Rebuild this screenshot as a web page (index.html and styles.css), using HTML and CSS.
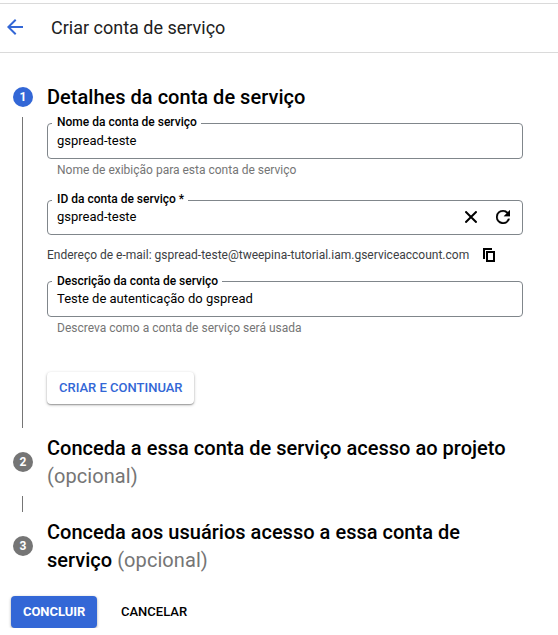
FILE: index.html
```html
<!DOCTYPE html>
<html lang="pt-BR">
<head>
<meta charset="utf-8">
<title>Criar conta de serviço</title>
<link rel="stylesheet" href="styles.css">
</head>
<body>
<header class="topbar">
  <svg class="back" viewBox="0 0 16 16" width="16" height="16"><path d="M16 7H3.800l5.600-5.600L8 0 0 8l8 8 1.400-1.400L3.800 9H16z" fill="#3367d6"/></svg>
  <h1 class="page-title">Criar conta de serviço</h1>
</header>
<main>
  <section class="step step-1">
    <div class="rail"><span class="badge active">1</span><span class="line"></span></div>
    <div class="body">
      <h2 class="heading">Detalhes da conta de serviço</h2>
      <div class="field field-name">
        <label class="label">Nome da conta de serviço</label>
        <span class="value">gspread-teste</span>
      </div>
      <p class="hint">Nome de exibição para esta conta de serviço</p>
      <div class="field field-id">
        <label class="label">ID da conta de serviço *</label>
        <span class="value">gspread-teste</span>
        <svg class="clear" viewBox="0 0 12 12" width="12" height="12"><path d="M.4.4l11.200 11.200M11.600.4L.4 11.600" stroke="#000" stroke-width="2" fill="none"/></svg>
        <svg class="reload" viewBox="4 4 16 16" width="14" height="14"><path d="M17.650 6.350A7.960 7.960 0 0 0 12 4a8 8 0 1 0 7.730 10h-2.080A6 6 0 1 1 12 6c1.660 0 3.140.69 4.220 1.780L13 11h7V4z" stroke="#000" stroke-width=".3"/></svg>
      </div>
      <p class="email"><span>Endereço de e-mail: gspread-teste@tweepina-tutorial.iam.gserviceaccount.com</span>
        <svg viewBox="0 0 12 14" width="12" height="14"><path d="M1 11V1h8M4 4h7v9H4z" stroke="#000" stroke-width="2" fill="none"/></svg></p>
      <div class="field field-desc">
        <label class="label">Descrição da conta de serviço</label>
        <span class="value">Teste de autenticação do gspread</span>
      </div>
      <p class="hint">Descreva como a conta de serviço será usada</p>
      <button class="btn raised">CRIAR E CONTINUAR</button>
    </div>
  </section>
  <section class="step step-2">
    <div class="rail"><span class="badge">2</span><span class="line"></span></div>
    <h2 class="heading">Conceda a essa conta de serviço acesso ao projeto <span class="optional">(opcional)</span></h2>
  </section>
  <section class="step step-3">
    <div class="rail"><span class="badge">3</span></div>
    <h2 class="heading">Conceda aos usuários acesso a essa conta de serviço <span class="optional">(opcional)</span></h2>
  </section>
  <footer class="actions">
    <button class="btn primary">CONCLUIR</button>
    <button class="btn text">CANCELAR</button>
  </footer>
</main>
</body>
</html>
```
FILE: styles.css
```css
* { box-sizing: border-box; }
body { margin: 0; background: #fff; color: #000; font-family: Roboto, sans-serif; }
h1, h2, p { margin: 0; }
.topbar { display: flex; align-items: center; gap: 28px; height: 50px; margin-top: 3px; padding: 0 0 2px 7px; border-top: 1px solid #dadada; border-bottom: 1px solid #dadada; }
.page-title { font-size: 18px; font-weight: 400; color: #212121; line-height: 24px; padding-top: 2px; }
.step { display: flex; gap: 14px; padding-left: 13px; }
.step-1 { margin-top: 30px; height: 345px; }
.rail { display: flex; flex-direction: column; align-items: center; flex: none; width: 20px; }
.badge { flex: none; width: 20px; height: 20px; border-radius: 50%; background: #757575; color: #fff; font-size: 12px; font-weight: 700; line-height: 20px; text-align: center; }
.active { background: #3367d6; }
.line { width: 1px; margin-right: 1px; background: #757575; }
.step-1 .rail { padding-top: 4px; }
.step-1 .line { height: 311px; margin-top: 10px; }
.body { width: 476px; }
.heading { width: 476px; font-size: 20px; font-weight: 500; line-height: 28px; letter-spacing: .02px; }
.optional { color: #757575; font-weight: 400; letter-spacing: .07px; }
.field { position: relative; display: flex; align-items: center; height: 36px; padding: 0 12px 0 9px; border: 1px solid #80868b; border-radius: 4px; }
.field-name { margin-top: 12px; }
.field-id { height: 35px; margin-top: 22px; }
.field-desc { margin-top: 18px; }
.label { position: absolute; left: 4px; top: -10px; height: 16px; padding: 0 4px 0 5px; background: #fff; font-size: 12px; font-weight: 500; line-height: 16px; white-space: nowrap; }
.field-desc .label { top: -9px; }
.value { flex: 1; font-size: 13px; line-height: 16px; }
.field-id .value { padding-bottom: 2px; }
.hint { margin: 3px 0 0 10px; color: #757575; font-size: 12px; line-height: 16px; white-space: nowrap; }
.clear, .reload { margin-bottom: 1px; }
.clear { margin-right: 19px; }
.email { display: flex; align-items: center; gap: 14px; height: 16px; margin-top: 12px; color: #3c4043; font-size: 12px; white-space: nowrap; }
.btn { display: block; height: 32px; padding: 0 12px; border: 0; border-radius: 4px; background: none; color: #000; font: 500 13px/32px Roboto, sans-serif; white-space: nowrap; }
.raised { width: 147px; margin-top: 36px; background: #fff; color: #3367d6; box-shadow: 0 1px 3px rgba(0,0,0,.3), 0 1px 1px rgba(0,0,0,.2); }
.step-2 { height: 84px; margin-top: 6px; }
.step-2 .rail, .step-3 .rail { padding-top: 18px; }
.step-2 .line { height: 16px; margin-top: 24px; }
.step-3 { height: 56px; }
.actions { display: flex; gap: 12px; margin: 22px 0 0 11px; }
.primary { width: 86px; background: #3367d6; color: #fff; font-weight: 700; letter-spacing: -.05px; box-shadow: 0 1px 3px rgba(0,0,0,.35); }
```
